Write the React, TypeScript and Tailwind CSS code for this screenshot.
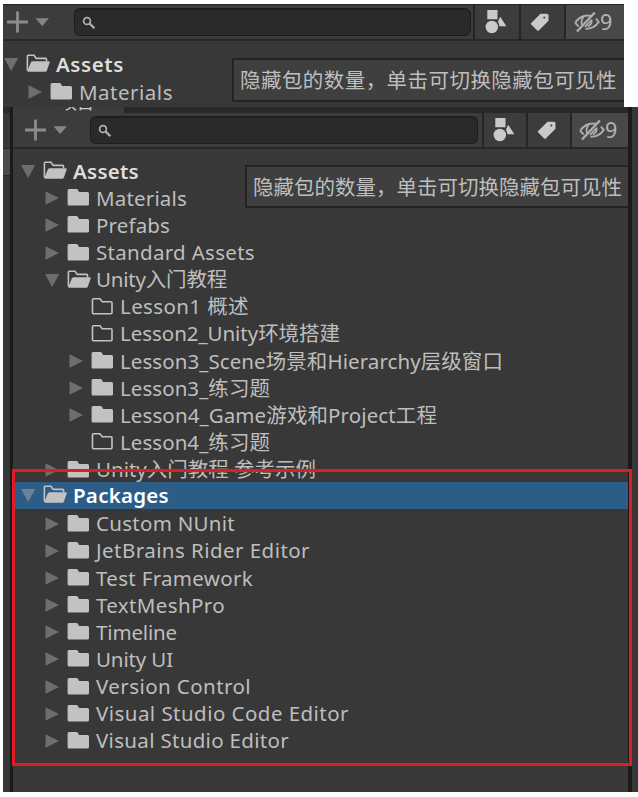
import { useLayoutEffect, useRef } from "react";

type Kind = "closed" | "open" | "empty";
type Item = {
  label: string;
  width: number;
  level: number;
  kind: Kind;
  bold?: boolean;
  selected?: boolean;
};

const items: Item[] = [
  { label: "Assets", width: 66, level: 0, kind: "open", bold: true },
  { label: "Materials", width: 91, level: 1, kind: "closed" },
  { label: "Prefabs", width: 74, level: 1, kind: "closed" },
  { label: "Standard Assets", width: 159, level: 1, kind: "closed" },
  { label: "Unity入门教程", width: 131, level: 1, kind: "open" },
  { label: "Lesson1 概述", width: 129, level: 2, kind: "empty" },
  { label: "Lesson2_Unity环境搭建", width: 220, level: 2, kind: "empty" },
  { label: "Lesson3_Scene场景和Hierarchy层级窗口", width: 383, level: 2, kind: "closed" },
  { label: "Lesson3_练习题", width: 150, level: 2, kind: "closed" },
  { label: "Lesson4_Game游戏和Project工程", width: 317, level: 2, kind: "closed" },
  { label: "Lesson4_练习题", width: 150, level: 2, kind: "empty" },
  { label: "Unity入门教程 参考示例", width: 220, level: 1, kind: "closed" },
  { label: "Packages", width: 96, level: 0, kind: "open", bold: true, selected: true },
  { label: "Custom NUnit", width: 139, level: 1, kind: "closed" },
  { label: "JetBrains Rider Editor", width: 214, level: 1, kind: "closed" },
  { label: "Test Framework", width: 157, level: 1, kind: "closed" },
  { label: "TextMeshPro", width: 129, level: 1, kind: "closed" },
  { label: "Timeline", width: 81, level: 1, kind: "closed" },
  { label: "Unity UI", width: 77, level: 1, kind: "closed" },
  { label: "Version Control", width: 155, level: 1, kind: "closed" },
  { label: "Visual Studio Code Editor", width: 253, level: 1, kind: "closed" },
  { label: "Visual Studio Editor", width: 193, level: 1, kind: "closed" },
];

const topItems: Item[] = [
  { label: "Assets", width: 68, level: 0, kind: "open", bold: true },
  { label: "Materials", width: 94, level: 1, kind: "closed" },
];

/** Single-line label whose tracking is adjusted to fill a given width. */
function Label({ text, width, className = "" }: { text: string; width: number; className?: string }) {
  const ref = useRef<HTMLSpanElement>(null);
  useLayoutEffect(() => {
    const el = ref.current;
    if (!el) return;
    el.style.letterSpacing = "0px";
    const natural = el.getBoundingClientRect().width;
    el.style.letterSpacing = `${(width - natural) / text.length}px`;
  }, [text, width]);
  return (
    <span ref={ref} className={`shrink-0 whitespace-pre ${className}`}>
      {text}
    </span>
  );
}

function Arrow({ open, selected }: { open: boolean; selected?: boolean }) {
  return (
    <svg width="16" height="16" viewBox="0 0 16 16" className={`shrink-0 ${selected ? "text-[#6b8296]" : "text-[#6e6e6e]"}`}>
      <path d={open ? "M1 2H15.2L8.2 15Z" : "M1.5 1.2L15 8L1.5 14.8Z"} fill="currentColor" />
    </svg>
  );
}

function Folder({ kind }: { kind: Kind }) {
  return (
    <svg width="25" height="20" viewBox="0 0 25 20" className="shrink-0 text-[#c2c2c2]">
      {kind === "closed" && (
        <path d="M2 1H9.5Q10.5 1 11 2L12 4H20.5Q22 4 22 5.5V16Q22 17.5 20.5 17.5H2Q.6 17.5 .6 16V2.5Q.6 1 2 1Z" fill="currentColor" />
      )}
      {kind === "empty" && (
        <path d="M2.5 1.8H9L11.2 4.7H20Q21 4.7 21 5.7V15.7Q21 16.7 20 16.7H2.5Q1.5 16.7 1.5 15.7V2.8Q1.5 1.8 2.5 1.8Z" fill="none" stroke="currentColor" strokeWidth="1.6" />
      )}
      {kind === "open" && (
        <>
          <path d="M1.4 16.5V2Q1.4 1.3 2.1 1.3H8L10.2 4.4H19.7Q20.5 4.4 20.5 5.2V7" fill="none" stroke="currentColor" strokeWidth="1.6" />
          <path d="M7 7.2H22.5Q24.3 7.2 23.7 8.5L20.9 16.5Q20.5 17.7 19.2 17.7H2.2Q.9 17.7 1.5 16.5L4.8 8.5Q5.3 7.2 7 7.2Z" fill="currentColor" />
        </>
      )}
    </svg>
  );
}

const indents = ["pl-[7px]", "pl-[31px]", "pl-[55px]"];
const folderColumns = ["w-[37px] pl-[7px]", "w-[36px] pl-[7px]", "w-[36px] pl-[7px]"];

function Row({ item, compact }: { item: Item; compact?: boolean }) {
  return (
    <div className={`flex shrink-0 items-center ${compact ? "h-[28px]" : "h-[27.14px]"} ${indents[item.level]} ${item.selected ? "-mt-[1.5px] mb-[1.5px] bg-[#2c5d87]" : ""}`}>
      {item.kind === "empty" ? <span className="w-4 shrink-0" /> : <Arrow open={item.kind === "open"} selected={item.selected} />}
      <span className={`flex shrink-0 ${folderColumns[item.level]}`}>
        <Folder kind={item.kind} />
      </span>
      <Label
        text={item.label}
        width={item.width}
        className={`${item.bold ? "font-semibold" : ""} ${item.selected ? "text-white" : item.bold ? "text-[#dedede]" : "text-[#bebebe]"}`}
      />
    </div>
  );
}

function AddButton() {
  return (
    <svg width="44" height="24" viewBox="0 0 44 24" className="shrink-0">
      <path d="M1 12H22M11.5 1.5V22.5" stroke="#8c8c8c" strokeWidth="2.8" />
      <path d="M29.5 8.3H43L36.2 16Z" fill="#858585" />
    </svg>
  );
}

function SearchIcon() {
  return (
    <svg width="14" height="14" viewBox="0 0 14 14">
      <circle cx="5" cy="5" r="3.4" fill="none" stroke="#b0b0b0" strokeWidth="1.7" />
      <path d="M7.4 7.4L12.4 12.2" stroke="#b0b0b0" strokeWidth="2.2" />
    </svg>
  );
}

function ShapesIcon() {
  return (
    <svg width="22" height="26" viewBox="0 0 22 26" className="shrink-0 text-[#cacaca]">
      <path d="M2.3 1H12.5V10.3H2.3ZM15.2 7.8L21.4 17.2H14.5L13 12.6Z" fill="currentColor" />
      <circle cx="6.8" cy="18" r="7.3" fill="#3c3c3c" />
      <circle cx="6.8" cy="18" r="6.2" fill="currentColor" />
    </svg>
  );
}

function TagIcon() {
  return (
    <svg width="20" height="20" viewBox="0 0 20 20" className="shrink-0">
      <path d="M10.5 1.8H17Q18.5 1.8 18.5 3.3V8.8L8.8 18.4Q8 19.2 7.2 18.4L1.2 12.4Q.4 11.6 1.2 10.9Z" fill="#cacaca" />
      <circle cx="14.3" cy="5.6" r="1.1" fill="#4a4a4a" />
    </svg>
  );
}

function HiddenIcon() {
  return (
    <svg width="26" height="22" viewBox="0 0 26 22" fill="none" stroke="#aeaeae" strokeWidth="2" className="shrink-0">
      <path d="M1.3 11.5Q6.5 4.3 14 4.5Q16 4.5 18 5.3M22 7.6L24.7 11Q20 18 11.5 17.8M4.8 15.3Q2.5 14 1.3 11.5" />
      <path d="M20.8 1.5L3 20.5" strokeWidth="2.4" />
      <path d="M8 14Q6.5 10 9.5 6M17.5 8.5Q18.5 13 14 15.5M11 15.8L17.5 9" strokeWidth="1.8" />
    </svg>
  );
}

function HiddenCount() {
  return (
    <>
      <HiddenIcon />
      <span className="mb-[2px] text-[21.5px]">9</span>
    </>
  );
}

function Tooltip({ width }: { width: number }) {
  return (
    <div className="flex h-full items-center border-2 border-r-0 border-[#242424] bg-[#3f3f3f] pt-px pl-[6px] text-[#bebebe]">
      <Label text="隐藏包的数量，单击可切换隐藏包可见性" width={width} />
    </div>
  );
}

function TopPanel() {
  return (
    <div className="relative ml-[3px] h-[103px] w-[621px] overflow-hidden bg-[#383838]">
      <div className="flex h-[37px] items-center border-t border-b-2 border-t-[#252525] border-b-[#282828] bg-[#3c3c3c]">
        <div className="flex w-[71px] shrink-0 pl-[3px]"><AddButton /></div>
        <div className="flex h-[28px] w-[397px] shrink-0 items-center rounded-[6px] border border-t-2 border-[#1e1e1e] bg-[#2a2a2a] pl-[7px]"><SearchIcon /></div>
        <div className="ml-[2px] flex h-full w-[46px] shrink-0 items-center border-l-2 border-[#252525] pl-[10px]"><ShapesIcon /></div>
        <div className="flex h-full w-[45px] shrink-0 items-center border-l-2 border-[#252525] pl-[9px]"><TagIcon /></div>
        <div className="flex h-full flex-1 items-center border-l-2 border-[#252525] bg-[#484848] pl-[8px] text-[#b5b5b5]"><HiddenCount /></div>
      </div>
      <div className="-ml-[7px] flex flex-col pt-[9px]">
        <Row item={topItems[0]} compact />
        <Row item={topItems[1]} compact />
      </div>
      <div className="absolute top-[54px] left-[229px] h-[44px] w-[392px]"><Tooltip width={377} /></div>
    </div>
  );
}

function ProjectPanel() {
  return (
    <div className="relative flex h-full w-[615px] shrink-0 flex-col overflow-hidden bg-[#383838]">
      <div className="flex h-[6px] shrink-0">
        <div className="flex h-full w-[111px] items-end overflow-hidden bg-[#3c3c3c] pl-[47px]">
          <span className="text-[17px] leading-[20px] text-[#cacaca]">项目</span>
        </div>
        <div className="h-full flex-1 bg-[#282828]" />
      </div>
      <div className="flex h-[36px] shrink-0 items-center border-b-2 border-[#272727] bg-[#3c3c3c]">
        <div className="flex w-[77px] shrink-0 pl-[11px]"><AddButton /></div>
        <div className="flex h-[28px] w-[388px] shrink-0 items-center rounded-[6px] border border-t-2 border-[#1e1e1e] bg-[#2a2a2a] pl-[7px]"><SearchIcon /></div>
        <div className="ml-[4px] flex h-full w-[44px] shrink-0 items-center border-l-2 border-[#252525] pl-[9px]"><ShapesIcon /></div>
        <div className="flex h-full w-[44px] shrink-0 items-center border-l-2 border-[#252525] pl-[9px]"><TagIcon /></div>
        <div className="flex h-full flex-1 items-center border-l-2 border-[#252525] bg-[#484848] pl-[7px] text-[#b5b5b5]"><HiddenCount /></div>
      </div>
      <div className="flex flex-col pt-[8.6px]">
        {items.map((item) => <Row key={item.label} item={item} />)}
      </div>
      <div className="absolute top-[58px] left-[232px] h-[43px] w-[383px]"><Tooltip width={369} /></div>
    </div>
  );
}

export default function App() {
  return (
    <div className="flex h-[797px] w-[638px] flex-col overflow-hidden bg-white pt-[4px] font-['Noto_Sans','Noto_Sans_CJK_SC',sans-serif] text-[20.5px] leading-[27px]">
      <TopPanel />
      <div className="relative ml-[3px] flex h-[685px] w-[635px] shrink-0">
        <div className="flex w-[7px] shrink-0 flex-col bg-[#363636]">
          <div className="h-[6px] bg-[#2a2a2a]" />
          <div className="h-[36px] border-b border-[#222] bg-[#383838]" />
          <div className="h-[27px] border-b border-[#2a2a2a] bg-[#4b4b4b]" />
        </div>
        <div className="w-[3px] shrink-0 bg-[#1b1b1b]" />
        <ProjectPanel />
        <div className="w-[4px] shrink-0 bg-[#1b1b1b]" />
        <div className="flex-1 bg-[#383838]" />
        <div className="absolute top-[362px] left-[9px] h-[297px] w-[620px] border-[3.5px] border-[#e01c25]" />
      </div>
    </div>
  );
}
